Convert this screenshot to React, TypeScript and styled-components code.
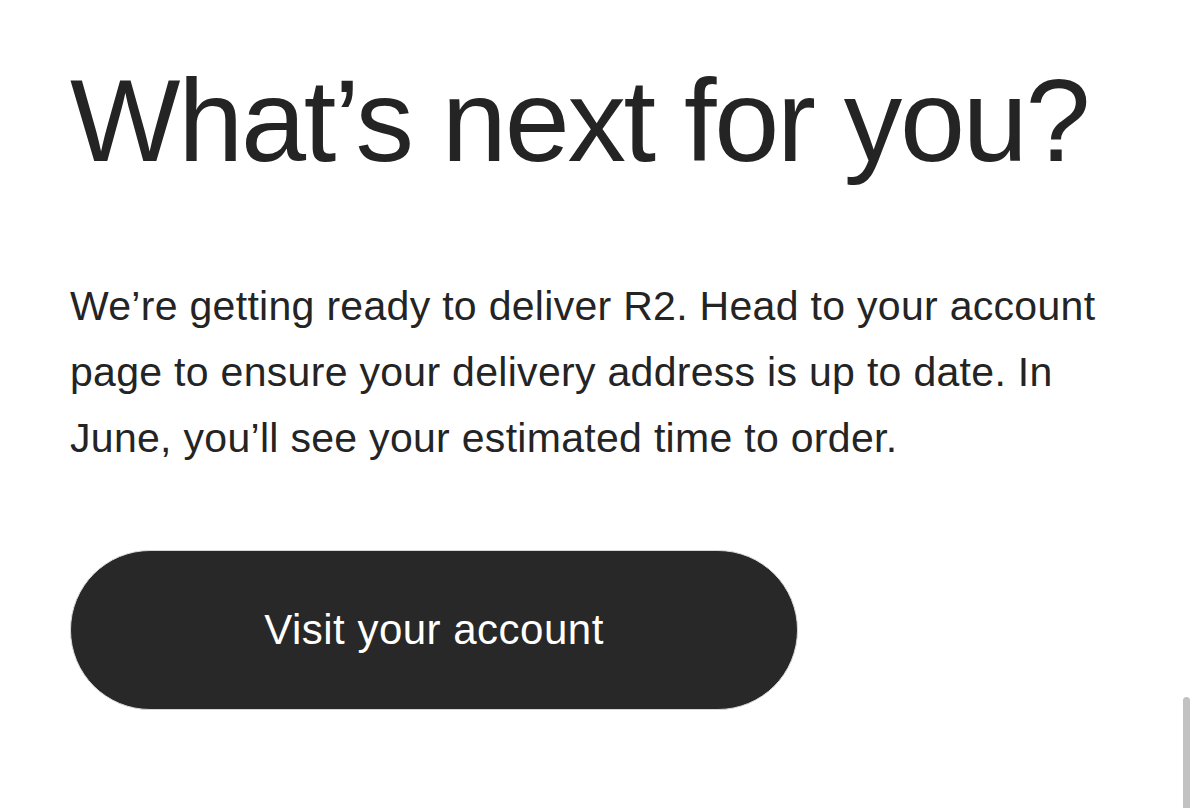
import React from "react";
import styled, { createGlobalStyle } from "styled-components";

const GlobalStyle = createGlobalStyle`
  html, body {
    margin: 0;
    padding: 0;
    background: #ffffff;
    height: 100%;
    overflow: hidden;
  }
  body {
    font-family: "Liberation Sans", Arial, Helvetica, sans-serif;
    color: #222222;
  }
`

const Page = styled.div`
  position: relative;
  width: 1200px;
  height: 808px;
  box-sizing: border-box;
  padding: 63px 0 0 70px;
  display: flex;
  flex-direction: column;
  align-items: flex-start;
`

const Heading = styled.h1`
  margin: 0;
  font-size: 117px;
  line-height: 116px;
  font-weight: 400;
  letter-spacing: -2.3px;
  color: #242424;
  white-space: nowrap;
`

const Body = styled.p`
  margin: 94px 0 0;
  font-size: 41px;
  line-height: 66px;
  color: #242424;
  letter-spacing: 0.3px;
`

const Line = styled.span`
  display: block;
  white-space: nowrap;
`

const PillButton = styled.button`
  margin-top: 79px;
  width: 728px;
  height: 160px;
  border-radius: 80px;
  background: #282828;
  border: 1px solid #d8d8d8;
  color: #ffffff;
  font-family: "Liberation Sans", Arial, Helvetica, sans-serif;
  font-size: 42px;
  letter-spacing: 0.5px;
  cursor: pointer;
  padding: 0;
`

const ScrollThumb = styled.div`
  position: absolute;
  right: 10px;
  top: 697px;
  width: 7px;
  height: 120px;
  border-radius: 4px;
  background: #c2c2c2;
`

const App = () => {
  return (
    <>
      <GlobalStyle />
      <Page>
        <Heading>What’s next for you?</Heading>
        <Body>
          <Line>We’re getting ready to deliver R2. Head to your account</Line>
          <Line>page to ensure your delivery address is up to date. In</Line>
          <Line>June, you’ll see your estimated time to order.</Line>
        </Body>
        <PillButton>Visit your account</PillButton>
        <ScrollThumb />
      </Page>
    </>
  );
}

export default App;
